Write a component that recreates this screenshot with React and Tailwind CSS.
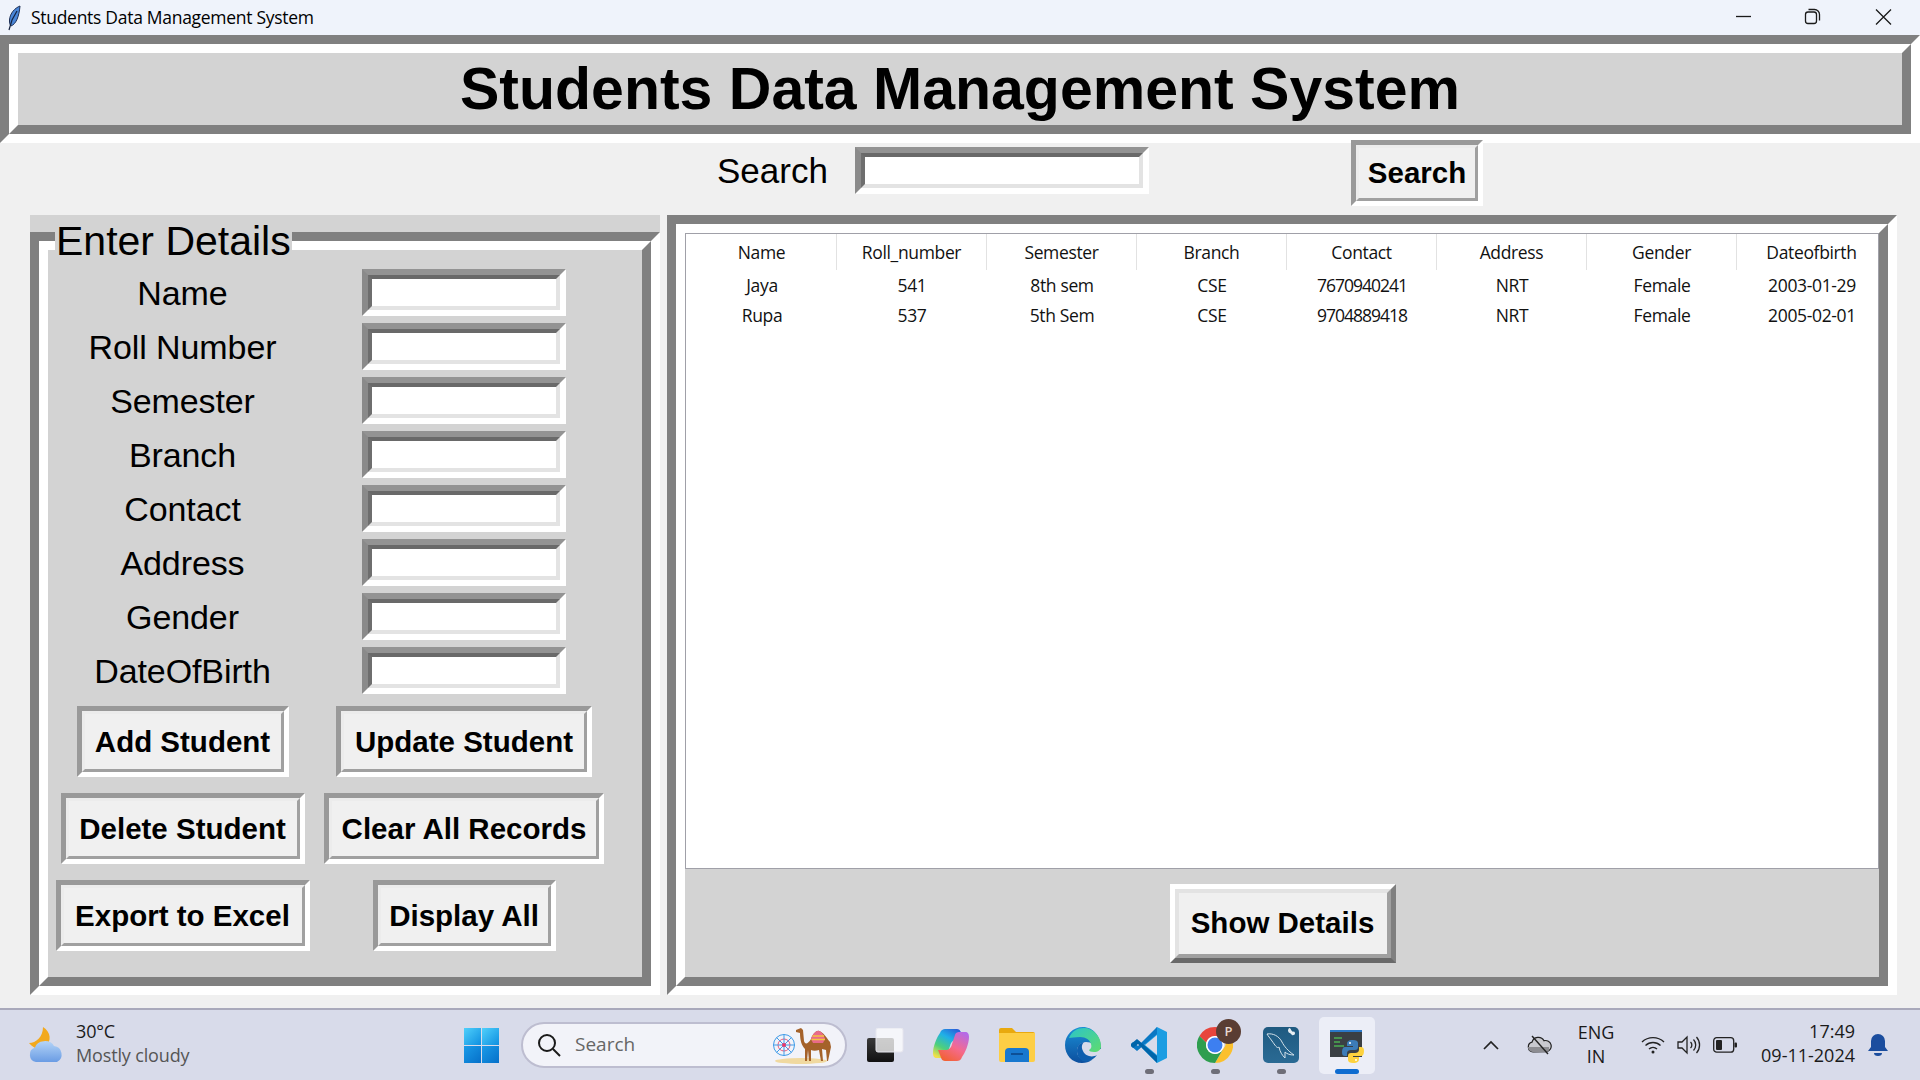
import React from 'react';

/* Tkinter "Students Data Management System" window with the Windows 11 taskbar under it. */

const COLUMNS = ['Name', 'Roll_number', 'Semester', 'Branch', 'Contact', 'Address', 'Gender', 'Dateofbirth'];
const ROWS = [
  ['Jaya', '541', '8th sem', 'CSE', '7670940241', 'NRT', 'Female', '2003-01-29'],
  ['Rupa', '537', '5th Sem', 'CSE', '9704889418', 'NRT', 'Female', '2005-02-01'],
];
const FIELDS = ['Name', 'Roll Number', 'Semester', 'Branch', 'Contact', 'Address', 'Gender', 'DateOfBirth'];
const RIBBON = 'M12 1H24C27 1 28 4 29 7L31 12H24C20 12 18 14 17 18L14 27C13 30 11 30 9 30H4C1 30 0 28 0 25C0 18 4 9 7 5C8 2 10 1 12 1Z';
const SNAKE = 'M11 0C6 0 5 2 5 4V6H11V7H3C1 7 0 9 0 12C0 15 1 16 3 16H5V13C5 11 7 10 9 10H13C15 10 16 9 16 7V3C16 1 14 0 11 0Z';

function Ridge({ className = '', inner = '', children }) {
  return (
    <div className={`border-[9px] border-t-[#808080] border-l-[#808080] border-r-white border-b-white ${className}`}>
      <div className={`h-full border-[9px] border-t-white border-l-white border-r-[#808080] border-b-[#808080] bg-[#d3d3d3] ${inner}`}>
        {children}
      </div>
    </div>
  );
}

function Entry({ className = '' }) {
  return (
    <div className={`h-[47px] border-[6px] border-t-[#939393] border-l-[#8a8a8a] border-r-white border-b-white ${className}`}>
      <div className="h-full border-[4px] border-t-[#696969] border-l-[#6e6e6e] border-r-[#e3e3e3] border-b-[#e3e3e3] bg-white" />
    </div>
  );
}

function SunkButton({ className = '', children }) {
  return (
    <div className={`border-[5px] border-t-[#999999] border-l-[#999999] border-r-white border-b-white ${className}`}>
      <div className="flex h-full items-center justify-center border-[3px] border-t-[#ececec] border-l-[#ececec] border-r-[#a0a0a0] border-b-[#a0a0a0] bg-[#f0f0f0] pt-[1px] text-[29.5px] font-bold text-black">
        {children}
      </div>
    </div>
  );
}

function FeatherIcon() {
  return (
    <svg width="14" height="26" viewBox="0 0 14 26">
      <path d="M13 1C8 3 3 8 2.500 15C2.300 18 3 20 4 21C9 19 12 12 13 1Z" fill="#4a86d8" stroke="#1d2f55" strokeWidth="1" />
      <path d="M10 6 5 15 2 25" fill="none" stroke="#16233f" strokeWidth="1.200" />
    </svg>
  );
}

function TitleBar() {
  return (
    <div className="flex h-[35px] items-center bg-[#eff3fb] text-black">
      <div className="ml-[7px] w-[24px]"><FeatherIcon /></div>
      <span className="text-[17.5px] font-['Open_Sans'] tracking-[-0.29px]">Students Data Management System</span>
      <svg className="ml-auto" width="184" height="35" viewBox="0 0 184 35" fill="none" stroke="#1a1a1a" strokeWidth="1.300">
        <path d="M0 16.500h15" />
        <rect x="69.500" y="12" width="11" height="11.500" rx="2.500" />
        <path d="M72.500 9.500h6a5 5 0 0 1 5 5v6" />
        <path d="M140 9.500 155 24.500M155 9.500 140 24.500" />
      </svg>
    </div>
  );
}

function DetailsPanel() {
  return (
    <div className="relative h-[780px] w-[630px] bg-[#d3d3d3] pt-[17px]">
      <span className="absolute left-[25px] top-[4px] bg-[#d3d3d3] px-[1px] text-[41px] leading-[44px] text-black">Enter Details</span>
      <Ridge className="h-[763px]" inner="pt-[19px]">
        <div className="grid grid-cols-[269px_294px] justify-items-center gap-y-[7px]">
          {FIELDS.map((f) => (
            <React.Fragment key={f}>
              <span className="h-[47px] text-[34px] leading-[48px] tracking-[-0.1px] text-black">{f}</span>
              <Entry className="w-[204px]" />
            </React.Fragment>
          ))}
        </div>
        <div className="mt-[12px] grid grid-cols-[269px_294px] justify-items-center gap-y-[16px]">
          <SunkButton className="h-[71px] w-[212px]">Add Student</SunkButton>
          <SunkButton className="h-[71px] w-[256px]">Update Student</SunkButton>
          <SunkButton className="h-[71px] w-[244px]">Delete Student</SunkButton>
          <SunkButton className="h-[71px] w-[280px]">Clear All Records</SunkButton>
          <SunkButton className="h-[71px] w-[254px]">Export to Excel</SunkButton>
          <SunkButton className="h-[71px] w-[183px]">Display All</SunkButton>
        </div>
      </Ridge>
    </div>
  );
}

function RecordsTable() {
  return (
    <div className="h-[636px] overflow-hidden border border-[#a0a0a8] bg-white font-['Open_Sans'] text-[17.500px] tracking-[-0.35px] text-[#111]">
      <div className="ml-[1px] grid h-[36px] w-[1200px] grid-cols-[repeat(8,150px)]">
        {COLUMNS.map((c) => (
          <div key={c} className="flex items-center justify-center border-r border-[#e2e2e2] pt-[1px]">{c}</div>
        ))}
      </div>
      {ROWS.map((row) => (
        <div key={row[0]} className="ml-[1px] grid h-[30px] w-[1200px] grid-cols-[repeat(8,150px)]">
          {row.map((v, i) => (
            <div key={i} className={i === 4 ? 'flex items-center justify-center tracking-[-1px]' : 'flex items-center justify-center'}>{v}</div>
          ))}
        </div>
      ))}
    </div>
  );
}

function RecordsPanel() {
  return (
    <Ridge className="ml-[7px] h-[780px] w-[1230px]">
      <RecordsTable />
      <div className="flex justify-center pl-[1px] pt-[15px]">
        <div className="h-[79px] w-[226px] border-[5px] border-t-white border-l-white border-r-[#808080] border-b-[#696969]">
          <div className="flex h-full items-center justify-center border-[4px] border-t-[#e3e3e3] border-l-[#e3e3e3] border-r-[#a0a0a0] border-b-[#a0a0a0] bg-[#f0f0f0] text-[29.5px] font-bold text-black">
            Show Details
          </div>
        </div>
      </div>
    </Ridge>
  );
}

function WeatherIcon() {
  return (
    <svg width="36" height="36" viewBox="0 0 36 36">
      <defs>
        <linearGradient id="wcloud" x1="0" y1="0" x2="0" y2="1">
          <stop offset="0" stopColor="#b4d4f7" />
          <stop offset="1" stopColor="#6a9ce4" />
        </linearGradient>
      </defs>
      <path d="M14 0C22 5 23 14 16 21C11 24 4 21 0 16C7 16 14 10 14 0Z" fill="#f2a91e" />
      <path d="M7 35A7.500 7.500 0 0 1 6 20.500A10 8 0 0 1 25 19A8.500 8.500 0 0 1 28 35Z" fill="url(#wcloud)" />
    </svg>
  );
}

function WindowsLogo() {
  return (
    <svg width="35" height="35" viewBox="0 0 35 35">
      <defs>
        <linearGradient id="win1" x1="0" y1="0" x2="1" y2="1">
          <stop offset="0" stopColor="#4fd0fb" />
          <stop offset="1" stopColor="#0f8fe0" />
        </linearGradient>
        <linearGradient id="win2" x1="0" y1="0" x2="1" y2="1">
          <stop offset="0" stopColor="#1a9be8" />
          <stop offset="1" stopColor="#0670c9" />
        </linearGradient>
      </defs>
      <rect x="0" y="0" width="17" height="17" fill="url(#win1)" />
      <rect x="18" y="0" width="17" height="17" fill="url(#win1)" />
      <rect x="0" y="18" width="17" height="17" fill="url(#win2)" />
      <rect x="18" y="18" width="17" height="17" fill="url(#win2)" />
    </svg>
  );
}

function CamelBadge() {
  return (
    <svg width="64" height="40" viewBox="0 0 64 40">
      <ellipse cx="28" cy="36" rx="26" ry="3" fill="#f0d9a0" />
      <g fill="none" stroke="#3f9be8" strokeWidth="1">
        <circle cx="11" cy="20" r="10.500" />
        <circle cx="11" cy="20" r="6" stroke="#e85a7a" />
        <path d="M11 9.500v21M.5 20h21M3.500 12.500l15 15M18.500 12.500l-15 15" />
      </g>
      <circle cx="11" cy="20" r="2" fill="#e8386a" />
      <path d="M23 5L28 3L30 5L31 16C32 20 35 19 38 14C40 8 44 5 46 6C50 7 53 12 57 17L58 22L55 36H54L53 25C52 25 50 24 49 24L50 36H48L46 25C43 26 40 26 38 25L38 36H36L35 25L34 36H32L32 24C29 21 27 16 27 8L23 7Z" fill="#a5622a" />
      <path d="M38 14C40 8 44 5 46 6C49 7 51 10 52 14L50 18H40Z" fill="#e86a8a" />
      <path d="M39.500 11H51M38.500 14.500H52" stroke="#f4c542" strokeWidth="1.300" />
    </svg>
  );
}

function TaskViewIcon() {
  return (
    <svg width="37" height="34" viewBox="0 0 37 34">
      <defs>
        <linearGradient id="tv" x1="0" y1="0" x2="0" y2="1">
          <stop offset="0" stopColor="#3a3a3a" />
          <stop offset="1" stopColor="#111" />
        </linearGradient>
      </defs>
      <rect x="0" y="10" width="27" height="24" rx="2" fill="url(#tv)" />
      <rect x="9" y="0" width="27" height="24" rx="2" fill="#fff" fillOpacity="0.750" stroke="#e6e6ee" />
    </svg>
  );
}

function CopilotIcon() {
  return (
    <svg width="36" height="34" viewBox="0 0 36 34">
      <defs>
        <linearGradient id="co1" x1="0.800" y1="0" x2="0.200" y2="1">
          <stop offset="0" stopColor="#2a5ad8" />
          <stop offset="0.350" stopColor="#1fb0e8" />
          <stop offset="0.700" stopColor="#4fd07a" />
          <stop offset="1" stopColor="#f2e04a" />
        </linearGradient>
        <linearGradient id="co2" x1="0.800" y1="0" x2="0.200" y2="1">
          <stop offset="0" stopColor="#f2612f" />
          <stop offset="0.500" stopColor="#f56a8e" />
          <stop offset="1" stopColor="#b46be8" />
        </linearGradient>
      </defs>
      <path d={RIBBON} fill="url(#co1)" />
      <path d={RIBBON} fill="url(#co2)" transform="rotate(180 18 17)" />
    </svg>
  );
}

function ExplorerIcon() {
  return (
    <svg width="36" height="34" viewBox="0 0 36 34">
      <path d="M0 2a2 2 0 0 1 2-2h11l4 4h17a2 2 0 0 1 2 2v6H0z" fill="#e9a90e" />
      <path d="M0 5h36v27a2 2 0 0 1-2 2H2a2 2 0 0 1-2-2z" fill="#fdce45" />
      <path d="M6 34V24a4 4 0 0 1 4-4h16a4 4 0 0 1 4 4v10z" fill="#1878cf" />
      <rect x="12" y="25" width="12" height="2" fill="#0d4f96" />
    </svg>
  );
}

function EdgeIcon() {
  return (
    <svg width="36" height="36" viewBox="0 0 36 36">
      <defs>
        <linearGradient id="ed1" x1="0" y1="0" x2="1" y2="1">
          <stop offset="0" stopColor="#2cc4c9" />
          <stop offset="1" stopColor="#5fdc6e" />
        </linearGradient>
        <linearGradient id="ed2" x1="0" y1="0" x2="0" y2="1">
          <stop offset="0" stopColor="#1b8fd6" />
          <stop offset="1" stopColor="#0c4f9e" />
        </linearGradient>
      </defs>
      <path d="M18 0C8 0 0 8 0 18c0 10 7 18 17 18 4 0 7-1 10-3-8 2-15-2-15-9 0-5 4-9 9-9 6 0 9 3 10 7h5c0-13-8-22-18-22z" fill="url(#ed2)" />
      <path d="M4 11C7 4 12 1 19 1c9 0 17 8 17 18 0 4-3 6-7 6-3 0-5-1-5-2 2-1 3-3 2-6-1-4-5-7-11-7-5 0-9 1-11 1z" fill="url(#ed1)" />
      <path d="M12 24c0-5 3-8 7-9-2 2-3 5-1 9 2 5 9 7 14 4-4 5-9 8-14 6-4-2-6-6-6-10z" fill="#0f5fae" />
    </svg>
  );
}

function VsCodeIcon() {
  return (
    <svg width="36" height="36" viewBox="0 0 36 36">
      <path d="M26 0l10 5v26l-10 5-15-15z" fill="#1b9de2" />
      <path d="M26 0 7 19l-5-4-2 2v2l6 5 20-17z" fill="#0a78c4" />
      <path d="M26 36 7 17l-5 4-2-2v-2l6-5 20 17z" fill="#0065a9" />
      <path d="M26 8v20L14 18z" fill="#d8dbea" />
    </svg>
  );
}

function ChromeIcon() {
  return (
    <div className="relative h-[36px] w-[36px]">
      <svg width="36" height="36" viewBox="0 0 36 36">
        <path d="M18 0a18 18 0 0 1 15.600 9H18a9 9 0 0 0-8.700 6.700L2.400 9A18 18 0 0 1 18 0z" fill="#e8453c" />
        <path d="M33.600 9A18 18 0 0 1 18 36l7.800-13.500a9 9 0 0 0 0-13.500z" fill="#fbc02d" />
        <path d="M2.400 9A18 18 0 0 0 18 36l7.800-13.500a9 9 0 0 1-16.500-6.800z" fill="#2e9e4f" />
        <circle cx="18" cy="18" r="9" fill="#fff" />
        <circle cx="18" cy="18" r="7.500" fill="#3d7ff0" />
      </svg>
      <span className="absolute left-[19px] top-[-8px] flex h-[25px] w-[25px] items-center justify-center rounded-full bg-[#5a3d33] font-['Open_Sans'] text-[13px] font-semibold text-[#e8d8d0]">P</span>
    </div>
  );
}

function MySqlIcon() {
  return (
    <svg width="36" height="36" viewBox="0 0 36 36">
      <defs>
        <linearGradient id="my" x1="0" y1="0" x2="0" y2="1">
          <stop offset="0" stopColor="#1f5a80" />
          <stop offset="1" stopColor="#2a6a94" />
        </linearGradient>
      </defs>
      <rect width="36" height="36" rx="5" fill="url(#my)" />
      <path d="M4 7C10 6 16 9 19 15C21 19 25 24 31 28C27 28 24 27 22 25L22 31C19 28 17 25 16 20C14 22 12 18 9 14C7 11 5 9 4 7Z" fill="none" stroke="#d5e2ea" strokeWidth="1" />
      <path d="M26 1C27.500 1 28 2 28 3L30 5C31 4 32 5 32 6.500C32 8 30 8.500 29 8L27 6C25.500 6 25 4 25 3Z" fill="#e8eef2" />
    </svg>
  );
}

function PythonIcon() {
  return (
    <svg width="34" height="36" viewBox="0 0 34 36">
      <rect x="0" y="3" width="32" height="27" fill="#3a3f44" />
      <rect x="0" y="3" width="32" height="2" fill="#2a78c8" />
      <path d="M4 11h8M4 15h6M4 19h10" stroke="#4caf50" strokeWidth="1.300" />
      <g transform="translate(12 13)">
        <path d={SNAKE} fill="#3c7cb8" />
        <path d={SNAKE} fill="#fdd23e" transform="rotate(180 11 11.500)" />
        <circle cx="8" cy="3" r="1" fill="#fff" />
        <circle cx="14" cy="20" r="1" fill="#fff" />
      </g>
    </svg>
  );
}

function TaskSlot({ dot, active, children }) {
  return (
    <div className="relative flex h-[72px] w-[66px] items-center justify-center">
      {active && <div className="absolute left-[5px] top-[8px] h-[57px] w-[56px] rounded-[5px] bg-[#eceef7]" />}
      <div className="relative">{children}</div>
      {dot && <div className="absolute left-[29px] top-[60px] h-[5px] w-[9px] rounded-full bg-[#6e6e78]" />}
      {active && <div className="absolute left-[21px] top-[60px] h-[5px] w-[24px] rounded-full bg-[#0f6cd0]" />}
    </div>
  );
}

function TrayIcons() {
  return (
    <>
      <svg className="ml-[103px]" width="16" height="10" viewBox="0 0 16 10" fill="none" stroke="#222" strokeWidth="1.700">
        <path d="M1 9l7-7 7 7" />
      </svg>
      <svg className="ml-[28px]" width="25" height="20" viewBox="0 0 25 20">
        <path d="M6 17a5 5 0 0 1-1-9.800 6.500 6.500 0 0 1 12-1.500 5.500 5.500 0 0 1 3 11z" fill="#c9c9cf" stroke="#222" strokeWidth="1.200" />
        <path d="M1 12h21v2a3 3 0 0 1-3 3H6a5 5 0 0 1-5-5z" fill="#8d8d92" />
        <path d="M5 1l16 18" stroke="#222" strokeWidth="1.400" />
      </svg>
      <div className="ml-[19px] mt-[-2px] w-[50px] text-center text-[18px] leading-[24px] text-[#1a1a1a]">
        <div>ENG</div>
        <div>IN</div>
      </div>
      <svg className="ml-[20px]" width="24" height="18" viewBox="0 0 24 18" fill="none" stroke="#222" strokeWidth="1.400">
        <path d="M1 6a16 16 0 0 1 22 0M4.500 9.500a11 11 0 0 1 15 0M8 13a6 6 0 0 1 8 0" />
        <circle cx="12" cy="16" r="1.500" fill="#222" stroke="none" />
      </svg>
      <svg className="ml-[12px]" width="24" height="20" viewBox="0 0 24 20" fill="none" stroke="#222" strokeWidth="1.300">
        <path d="M1 7v6h4l5 5V2L5 7z" />
        <path d="M13.500 7a4 4 0 0 1 0 6M16.500 4.500a8 8 0 0 1 0 11M19.500 2a12 12 0 0 1 0 16" />
      </svg>
      <svg className="ml-[12px]" width="24" height="16" viewBox="0 0 24 16">
        <rect x="0.700" y="0.700" width="20" height="14.500" rx="3" fill="none" stroke="#222" strokeWidth="1.300" />
        <rect x="3" y="3" width="6" height="10" rx="1" fill="#222" />
        <rect x="21.500" y="5.500" width="2.500" height="5" rx="1" fill="#222" />
      </svg>
    </>
  );
}

function Taskbar() {
  return (
    <div className="flex h-[72px] items-center border-t-2 border-[#a9a9bb] bg-[#d8dbea] font-['Open_Sans']">
      <div className="flex w-[464px] items-center pl-[29px]">
        <WeatherIcon />
        <div className="ml-[11px] mt-[-4px] text-[18px] leading-[24px] tracking-[-0.15px]">
          <div className="text-[#1a1a1a]">30°C</div>
          <div className="text-[#555]">Mostly cloudy</div>
        </div>
      </div>
      <WindowsLogo />
      <div className="ml-[22px] flex h-[46px] w-[326px] items-center rounded-full border-2 border-[#bdbdd0] bg-[#f2f3f9]">
        <svg className="ml-[14px]" width="24" height="24" viewBox="0 0 24 24" fill="none" stroke="#1a1a1a" strokeWidth="2">
          <circle cx="10" cy="10" r="8" />
          <path d="M16 16l7 7" />
        </svg>
        <span className="ml-[14px] mt-[-2px] text-[19px] text-[#666]">Search</span>
        <div className="ml-auto mr-[8px] flex"><CamelBadge /></div>
      </div>
      <div className="ml-[5px] flex">
        <TaskSlot><TaskViewIcon /></TaskSlot>
        <TaskSlot><CopilotIcon /></TaskSlot>
        <TaskSlot><ExplorerIcon /></TaskSlot>
        <TaskSlot><EdgeIcon /></TaskSlot>
        <TaskSlot dot><VsCodeIcon /></TaskSlot>
        <TaskSlot dot><ChromeIcon /></TaskSlot>
        <TaskSlot dot><MySqlIcon /></TaskSlot>
        <TaskSlot active><PythonIcon /></TaskSlot>
      </div>
      <TrayIcons />
      <div className="mt-[-4px] w-[118px] text-right text-[18px] leading-[24px] text-[#1a1a1a]">
        <div>17:49</div>
        <div>09-11-2024</div>
      </div>
      <svg className="ml-[13px]" width="20" height="24" viewBox="0 0 20 24" fill="#1b4d9e">
        <path d="M10 1a7 7 0 0 0-7 7v6l-3 4h20l-3-4V8a7 7 0 0 0-7-7z" />
        <path d="M6 20a4 3 0 0 0 8 0z" />
      </svg>
    </div>
  );
}

export default function App() {
  return (
    <div className="flex h-[1080px] w-[1920px] flex-col overflow-hidden bg-[#f0f0f0] font-['Liberation_Sans',Arial,sans-serif]">
      <TitleBar />
      <div className="h-[973px]">
        <Ridge className="h-[108px]" inner="flex items-center justify-center">
          <span className="text-[59px] font-bold leading-none text-black">Students Data Management System</span>
        </Ridge>
        <div className="flex h-[72px] items-start pl-[717px]">
          <span className="mt-[8px] w-[138px] text-[35px] leading-[40px] text-black">Search</span>
          <Entry className="mt-[4px] w-[294px]" />
          <SunkButton className="relative ml-[202px] mt-[-3px] h-[66px] w-[132px]">Search</SunkButton>
        </div>
        <div className="flex pl-[30px]">
          <DetailsPanel />
          <RecordsPanel />
        </div>
      </div>
      <Taskbar />
    </div>
  );
}
